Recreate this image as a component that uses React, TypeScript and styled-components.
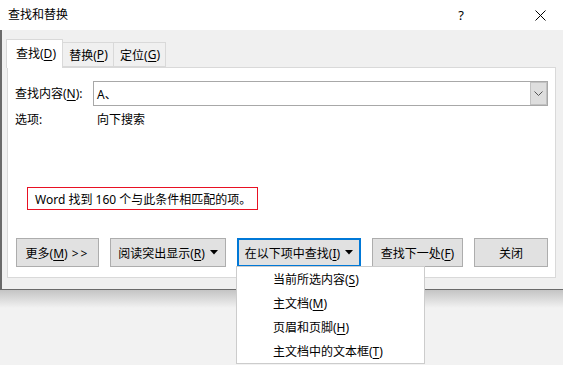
import styled, { createGlobalStyle } from 'styled-components'

const GlobalStyle = createGlobalStyle`
  html, body { margin: 0; padding: 0; }
  body {
    width: 563px;
    height: 365px;
    overflow: hidden;
    background: #f2f2f2;
    font-family: "Noto Sans", "Noto Sans CJK SC", sans-serif;
    font-size: 12px;
    color: #000;
  }
  * { box-sizing: border-box; }
`

const Page = styled.div`
  position: relative;
  width: 563px;
  height: 365px;
`

const Dialog = styled.div`
  width: 563px;
`

const TitleBar = styled.div`
  height: 30px;
  background: #fff;
  display: flex;
  align-items: center;
  padding-left: 8px;
`

const Title = styled.div`
  flex: 1;
  line-height: 16px;
`

const TitleButton = styled.div<{ $gap?: number }>`
  width: 46px;
  height: 30px;
  display: flex;
  align-items: center;
  justify-content: center;
  margin-right: ${(p) => p.$gap ?? 0}px;
  font-size: 13px;
`

const Body = styled.div`
  background: #f0f0f0;
  border-left: 2px solid #6a6a6a;
  border-bottom: 1px solid #6a6a6a;
  padding: 9px 0 11px 4px;
`

const TabStrip = styled.div`
  display: flex;
  align-items: flex-end;
  height: 28px;
`

const Tab = styled.div<{ $active?: boolean; $w: number }>`
  width: ${(p) => p.$w}px;
  height: ${(p) => (p.$active ? 29 : 25)}px;
  margin-bottom: ${(p) => (p.$active ? -1 : 0)}px;
  position: relative;
  z-index: ${(p) => (p.$active ? 1 : 0)};
  background: ${(p) => (p.$active ? '#fff' : '#f0f0f0')};
  border: 1px solid #d9d9d9;
  border-bottom: ${(p) => (p.$active ? 'none' : '1px solid #d9d9d9')};
  margin-left: ${(p) => (p.$active ? 0 : -1)}px;
  display: flex;
  align-items: center;
  justify-content: center;
  padding-bottom: ${(p) => (p.$active ? 2 : 0)}px;
  padding-left: ${(p) => (p.$active ? 3 : 1)}px;
`

const Key = styled.span`
  text-decoration: underline;
  text-underline-offset: 2px;
`

const Panel = styled.div`
  margin-left: 1px;
  width: 549px;
  height: 211px;
  background: #fff;
  border: 1px solid #d9d9d9;
  padding: 13px 7px 10px 7px;
  display: flex;
  flex-direction: column;
`

const FieldRow = styled.div`
  display: flex;
  align-items: center;
  height: 25px;
`

const Label = styled.div`
  width: 78px;
  line-height: 18px;
`

const Combo = styled.div`
  width: 455px;
  height: 25px;
  border: 1px solid #a8a8a8;
  display: flex;
`

const ComboText = styled.div`
  flex: 1;
  padding-left: 3px;
  display: flex;
  align-items: center;
`

const ComboButton = styled.div`
  width: 17px;
  background: #dedede;
  border: 1px solid #c2c2c2;
  display: flex;
  align-items: center;
  justify-content: center;
`

const OptionRow = styled.div`
  display: flex;
  align-items: center;
  height: 18px;
  margin-top: 4px;
`

const OptionLabel = styled.div`
  width: 82px;
`

const Message = styled.div`
  align-self: flex-start;
  margin: 59px 0 0 12px;
  height: 23px;
  padding: 0 6px 0 7px;
  border: 1px solid #e81123;
  display: flex;
  align-items: center;
  font-size: 12px;
`

const ButtonRow = styled.div`
  margin-top: auto;
  padding-left: 1px;
  display: flex;
  gap: 11px;
`

const Button = styled.div<{ $w: number; $focus?: boolean }>`
  width: ${(p) => p.$w}px;
  height: 29px;
  background: #e1e1e1;
  border: ${(p) => (p.$focus ? '2px solid #0078d7' : '1px solid #adadad')};
  display: flex;
  align-items: center;
  justify-content: center;
  gap: 5px;
  white-space: nowrap;
`

const Arrows = styled.span`
  margin-left: 4px;
  letter-spacing: 2px;
`

const Shade = styled.div`
  height: 18px;
  background: linear-gradient(#c4c4c4, #f2f2f2);
`

const Menu = styled.div`
  position: absolute;
  left: 236px;
  top: 266px;
  width: 189px;
  height: 98px;
  background: #fff;
  border: 1px solid #cccccc;
  z-index: 5;
`

const MenuItem = styled.div`
  height: 24px;
  padding-left: 36px;
  display: flex;
  align-items: center;
`

const Caret = () => (
  <svg width="8" height="5" viewBox="0 0 8 5">
    <path d="M0 0H8L4 4.5Z" fill="#000" />
  </svg>
)

export default function App() {
  return (
    <Page>
      <GlobalStyle />
      <Dialog>
        <TitleBar>
          <Title>查找和替换</Title>
          <TitleButton $gap={33}>?</TitleButton>
          <TitleButton>
            <svg width="11" height="11" viewBox="0 0 11 11">
              <path d="M0.5 0.5L10.5 10.5M10.5 0.5L0.5 10.5" stroke="#000" strokeWidth="1" />
            </svg>
          </TitleButton>
        </TitleBar>
        <Body>
          <TabStrip>
            <Tab $active $w={57}>
              查找(<Key>D</Key>)
            </Tab>
            <Tab $w={52}>
              替换(<Key>P</Key>)
            </Tab>
            <Tab $w={53}>
              定位(<Key>G</Key>)
            </Tab>
          </TabStrip>
          <Panel>
            <FieldRow>
              <Label>
                查找内容(<Key>N</Key>):
              </Label>
              <Combo>
                <ComboText>A、</ComboText>
                <ComboButton>
                  <svg width="9" height="5" viewBox="0 0 9 5">
                    <path d="M0.5 0.5L4.5 4.5L8.5 0.5" stroke="#555" fill="none" strokeWidth="1" />
                  </svg>
                </ComboButton>
              </Combo>
            </FieldRow>
            <OptionRow>
              <OptionLabel>选项:</OptionLabel>
              <div>向下搜索</div>
            </OptionRow>
            <Message>Word 找到 160 个与此条件相匹配的项。</Message>
            <ButtonRow>
              <Button $w={83}>
                <span>
                  更多(<Key>M</Key>)<Arrows>&gt;&gt;</Arrows>
                </span>
              </Button>
              <Button $w={116}>
                <span>
                  阅读突出显示(<Key>R</Key>)
                </span>
                <Caret />
              </Button>
              <Button $w={124} $focus>
                <span>
                  在以下项中查找(<Key>I</Key>)
                </span>
                <Caret />
              </Button>
              <Button $w={91}>
                <span>
                  查找下一处(<Key>F</Key>)
                </span>
              </Button>
              <Button $w={74}>关闭</Button>
            </ButtonRow>
          </Panel>
        </Body>
        <Shade />
      </Dialog>
      <Menu>
        <MenuItem>
          当前所选内容(<Key>S</Key>)
        </MenuItem>
        <MenuItem>
          主文档(<Key>M</Key>)
        </MenuItem>
        <MenuItem>
          页眉和页脚(<Key>H</Key>)
        </MenuItem>
        <MenuItem>
          主文档中的文本框(<Key>T</Key>)
        </MenuItem>
      </Menu>
    </Page>
  )
}
